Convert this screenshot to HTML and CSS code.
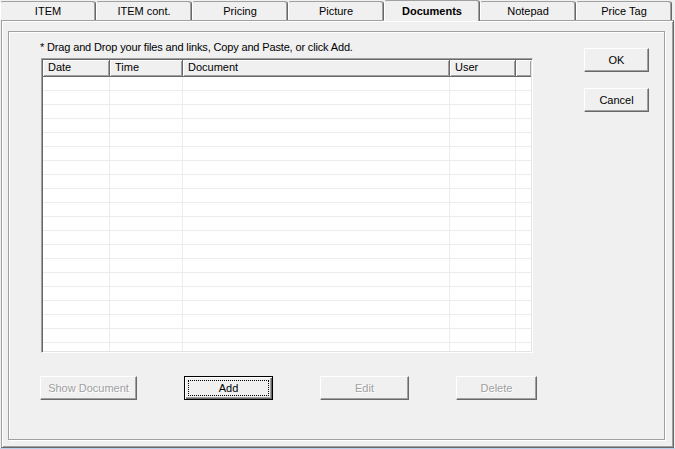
FILE: index.html
```html
<!DOCTYPE html>
<html lang="en">
<head>
  <meta charset="UTF-8" />
  <title>Item - Documents</title>
  <link rel="stylesheet" href="styles.css">
</head>
<body>
  <div class="tabs">
    <div class="tab">ITEM</div>
    <div class="tab">ITEM cont.</div>
    <div class="tab">Pricing</div>
    <div class="tab">Picture</div>
    <div class="tab active">Documents</div>
    <div class="tab">Notepad</div>
    <div class="tab">Price Tag</div>
  </div>

  <div class="panel">
    <div class="group">
      <div class="main">
        <p class="note">* Drag and Drop your files and links, Copy and Paste, or click Add.</p>

        <div class="list">
          <div class="list-head">
            <div>Date</div>
            <div>Time</div>
            <div>Document</div>
            <div>User</div>
            <div></div>
          </div>
          <div class="list-body">
            <div></div>
            <div></div>
            <div></div>
            <div></div>
            <div></div>
          </div>
        </div>

        <div class="actions">
          <button class="btn btn-show" disabled>Show Document</button>
          <button class="btn btn-add default">Add</button>
          <button class="btn btn-edit" disabled>Edit</button>
          <button class="btn btn-delete" disabled>Delete</button>
        </div>
      </div>

      <div class="side">
        <button class="btn btn-side">OK</button>
        <button class="btn btn-side">Cancel</button>
      </div>
    </div>
  </div>
</body>
</html>
```

FILE: styles.css
```css
html {
  background: #f0f0f0;
}

body {
  margin: 0;
  height: 448px;
  border-bottom: 1px solid #b9d1ea;
  font-family: 'Liberation Sans', Arial, sans-serif;
  font-size: 11px;
  color: #000;
  background: #f0f0f0;
  overflow: hidden;
}

/* tab strip */
.tabs {
  display: flex;
  height: 20px;
}

.tab {
  width: 96px;
  height: 19px;
  margin-top: 1px;
  box-sizing: border-box;
  border-top: 1px solid #a0a0a0;
  border-left: 1px solid #fff;
  border-right: 1px solid #696969;
  border-radius: 3px 3px 0 0;
  box-shadow: inset -1px 0 #a0a0a0;
  text-align: center;
  line-height: 18px;
  background: #f0f0f0;
}

.tab.active {
  position: relative;
  z-index: 1;
  height: 21px;
  margin-top: 0;
  font-weight: bold;
  line-height: 20px;
}

/* page of the tab control */
.panel {
  height: 428px;
  margin-left: 1px;
  width: 673px;
  box-sizing: border-box;
  padding: 10px 0 0 6px;
  border-top: 1px solid #a0a0a0;
  border-left: 1px solid #a0a0a0;
  border-right: 1px solid #696969;
  border-bottom: 1px solid #696969;
  box-shadow: inset 1px 1px #fff, inset -1px -1px #a0a0a0;
}

.group {
  display: flex;
  width: 657px;
  height: 409px;
  box-sizing: border-box;
  padding: 9px 0 0 31px;
  border: 1px solid #a0a0a0;
  box-shadow: inset 1px 1px #fff, 1px 1px #fff;
}

.main {
  width: 497px;
}

.note {
  margin: 0;
  line-height: 13px;
  letter-spacing: -0.15px;
  white-space: nowrap;
}

/* list view */
.list {
  margin: 4px 0 0 1px;
  width: 492px;
  height: 295px;
  box-sizing: border-box;
  border-top: 1px solid #a0a0a0;
  border-left: 1px solid #a0a0a0;
  border-right: 1px solid #fff;
  border-bottom: 1px solid #fff;
  box-shadow: inset 1px 1px #696969, inset -1px -1px #e3e3e3;
  padding: 1px;
  display: flex;
  flex-direction: column;
}

.list-head,
.list-body {
  display: grid;
  grid-template-columns: 67px 73px 267px 66px 1fr;
}

.list-head > div {
  height: 16px;
  line-height: 15px;
  padding-left: 5px;
  border-right: 1px solid #696969;
  border-bottom: 1px solid #696969;
  box-shadow: inset 1px 1px #fff, inset -1px -1px #a0a0a0;
  background: #f0f0f0;
}

.list-head > div:last-child {
  border-right: none;
}

.list-body {
  flex: 1;
  background: #fff repeating-linear-gradient(to bottom, transparent 0 13px, #ececec 13px 14px);
}

.list-body > div {
  border-right: 1px solid #ececec;
}

.list-body > div:last-child {
  border-right: none;
}

/* buttons */
.btn {
  height: 24px;
  padding: 0;
  box-sizing: border-box;
  font-family: inherit;
  font-size: 11px;
  color: #000;
  background: #f0f0f0;
  border: 1px solid;
  border-color: #fff #696969 #696969 #fff;
  box-shadow: inset -1px -1px #a0a0a0;
  border-radius: 0;
}

.btn:disabled {
  color: #a0a0a0;
  text-shadow: 1px 1px #fff;
}

.btn.default {
  border-color: #000;
  box-shadow: inset 1px 1px #fff, inset -1px -1px #696969, inset -2px -2px #a0a0a0;
  outline: 1px dotted #000;
  outline-offset: -5px;
}

.actions {
  display: flex;
  gap: 47px;
  margin-top: 23px;
}

.btn-show { width: 97px; }
.btn-add { width: 89px; }
.btn-edit { width: 89px; }
.btn-delete { width: 81px; }

.side {
  display: flex;
  flex-direction: column;
  gap: 16px;
  margin: 7px 0 0 47px;
}

.btn-side {
  width: 65px;
}
```
